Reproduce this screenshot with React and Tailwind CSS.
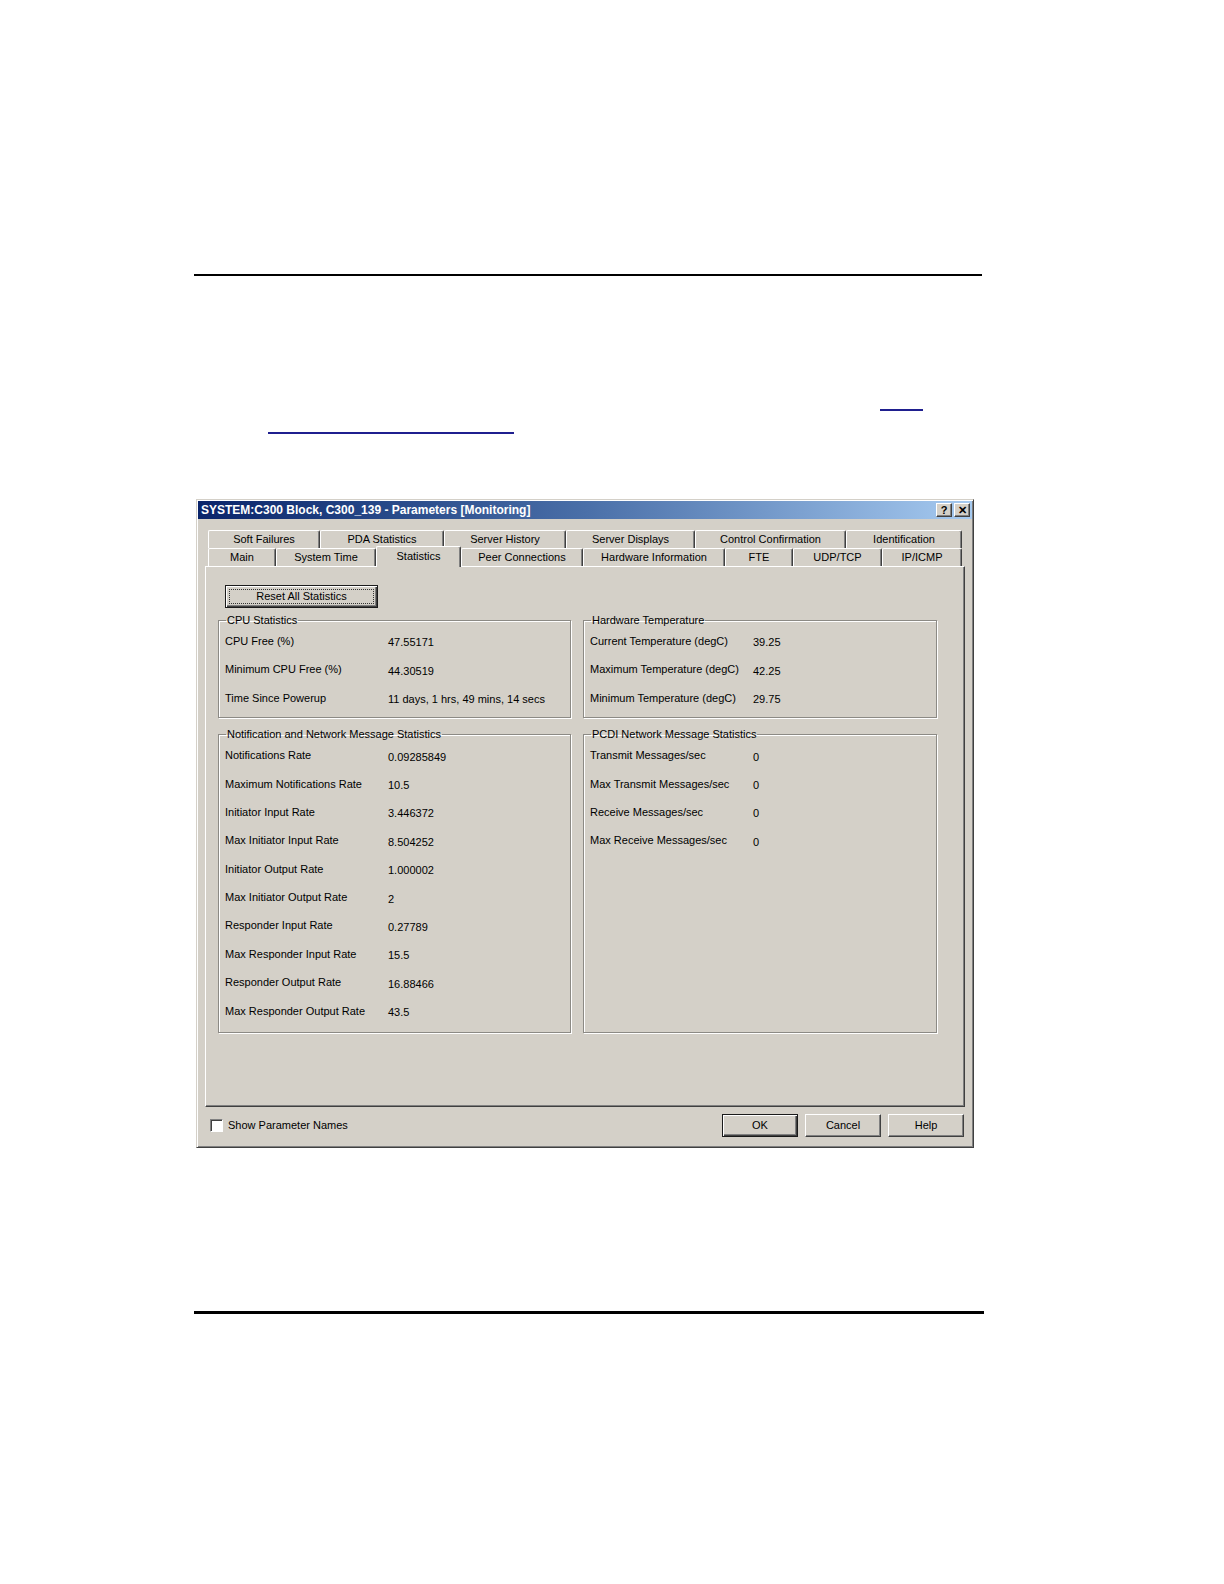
const topTabs = [
  { label: "Soft Failures", w: "w-[112px]" },
  { label: "PDA Statistics", w: "w-[124px]" },
  { label: "Server History", w: "w-[122px]" },
  { label: "Server Displays", w: "w-[129px]" },
  { label: "Control Confirmation", w: "w-[151px]" },
  { label: "Identification", w: "w-[116px]" },
];

const bottomTabs = [
  { label: "Main", w: "w-[68px]" },
  { label: "System Time", w: "w-[100px]" },
  { label: "Statistics", w: "w-[85px]", active: true },
  { label: "Peer Connections", w: "w-[122px]" },
  { label: "Hardware Information", w: "w-[142px]" },
  { label: "FTE", w: "w-[68px]" },
  { label: "UDP/TCP", w: "w-[89px]" },
  { label: "IP/ICMP", w: "w-[80px]" },
];

const cpuRows = [
  ["CPU Free (%)", "47.55171"],
  ["Minimum CPU Free (%)", "44.30519"],
  ["Time Since Powerup", "11 days, 1 hrs, 49 mins, 14 secs"],
];

const tempRows = [
  ["Current Temperature (degC)", "39.25"],
  ["Maximum Temperature (degC)", "42.25"],
  ["Minimum Temperature (degC)", "29.75"],
];

const notifRows = [
  ["Notifications Rate", "0.09285849"],
  ["Maximum Notifications Rate", "10.5"],
  ["Initiator Input Rate", "3.446372"],
  ["Max Initiator Input Rate", "8.504252"],
  ["Initiator Output Rate", "1.000002"],
  ["Max Initiator Output Rate", "2"],
  ["Responder Input Rate", "0.27789"],
  ["Max Responder Input Rate", "15.5"],
  ["Responder Output Rate", "16.88466"],
  ["Max Responder Output Rate", "43.5"],
];

const pcdiRows = [
  ["Transmit Messages/sec", "0"],
  ["Max Transmit Messages/sec", "0"],
  ["Receive Messages/sec", "0"],
  ["Max Receive Messages/sec", "0"],
];

function GroupBox({ title, rows, pb }) {
  return (
    <fieldset
      className={`min-w-0 border border-[#8c8a85] px-[6px] shadow-[inset_1px_1px_0_#fff,1px_1px_0_#fff] ${pb}`}
    >
      <legend className="ml-[1px] px-[1px] text-[11px] leading-[13px]">{title}</legend>
      <div className="flex flex-col">
        {rows.map(([label, value]) => (
          <div key={label} className="flex h-[28.4px] items-center">
            <span className="w-[163px] shrink-0 whitespace-nowrap">{label}</span>
            <span className="whitespace-nowrap pt-[3px]">{value}</span>
          </div>
        ))}
      </div>
    </fieldset>
  );
}

function Win98Button({ children, isDefault, w = "w-[76px]" }) {
  return (
    <button
      type="button"
      className={`flex h-[23px] ${w} items-center justify-center bg-[#d4d0c8] text-[11px] ${
        isDefault
          ? "border border-[#1a1a1a] shadow-[inset_1px_1px_0_#fff,inset_-1px_-1px_0_#404040,inset_-2px_-2px_0_#808080]"
          : "border border-t-white border-l-white border-r-[#404040] border-b-[#404040] shadow-[inset_-1px_-1px_0_#808080]"
      }`}
    >
      {children}
    </button>
  );
}

function TitleButton({ children }) {
  return (
    <div className="flex h-[14px] w-[16px] items-center justify-center border border-t-white border-l-white border-r-[#404040] border-b-[#404040] bg-[#d4d0c8] text-[11px] leading-none font-bold text-black shadow-[inset_-1px_-1px_0_#808080]">
      {children}
    </div>
  );
}

function Tab({ label, w, active }) {
  if (active) {
    return (
      <div
        className={`relative z-10 -mb-[1px] flex h-[21px] ${w} items-center justify-center rounded-t-[2px] border-t border-l border-r border-t-white border-l-white border-r-[#404040] bg-[#d4d0c8] pb-[1px] shadow-[inset_-1px_0_0_#808080]`}
      >
        {label}
      </div>
    );
  }
  return (
    <div
      className={`flex h-full ${w} items-center justify-center rounded-t-[2px] border-t border-l border-r border-t-white border-l-white border-r-[#404040] shadow-[inset_-1px_0_0_#808080]`}
    >
      {label}
    </div>
  );
}

function ParametersDialog() {
  return (
    <div className="ml-[196px] mt-[65px] flex h-[649px] w-[778px] flex-col border border-t-[#d4d0c8] border-l-[#d4d0c8] border-r-[#404040] border-b-[#404040] bg-[#d4d0c8] p-[1px] text-[11px] text-black shadow-[inset_1px_1px_0_#fff,inset_-1px_-1px_0_#808080]">
      {/* title bar */}
      <div className="flex h-[18px] shrink-0 items-center bg-linear-to-r from-[#0a246a] via-[#4a6fa8] to-[#a6caf0] pl-[3px] pr-[2px]">
        <span className="text-[12px] font-bold whitespace-nowrap text-white">
          SYSTEM:C300 Block, C300_139 - Parameters [Monitoring]
        </span>
        <div className="ml-auto flex gap-[2px]">
          <TitleButton>?</TitleButton>
          <TitleButton>✕</TitleButton>
        </div>
      </div>

      <div className="flex flex-1 flex-col px-[7px] pt-[11px]">
        {/* tabs */}
        <div className="ml-[3px] flex w-[754px] flex-col">
          <div className="flex h-[18px]">
            {topTabs.map((t) => (
              <Tab key={t.label} {...t} />
            ))}
          </div>
          <div className="flex h-[18px] items-end">
            {bottomTabs.map((t) => (
              <Tab key={t.label} {...t} />
            ))}
          </div>
        </div>

        {/* tab page */}
        <div className="flex h-[541px] flex-col border border-t-white border-l-white border-r-[#404040] border-b-[#404040] pl-[12px] pt-[18px] shadow-[inset_-1px_-1px_0_#808080]">
          <button
            type="button"
            className="ml-[7px] flex h-[23px] w-[153px] items-center justify-center border border-[#1a1a1a] bg-[#d4d0c8] p-[3px] text-[11px] shadow-[inset_1px_1px_0_#fff,inset_-1px_-1px_0_#404040,inset_-2px_-2px_0_#808080]"
          >
            <span className="flex h-full w-full items-center justify-center border border-dotted border-[#333]">
              Reset All Statistics
            </span>
          </button>

          <div className="mt-[6px] grid grid-cols-[353px_354px] gap-x-[12px] gap-y-[10px]">
            <GroupBox title="CPU Statistics" rows={cpuRows} pb="pb-[5px]" />
            <GroupBox title="Hardware Temperature" rows={tempRows} pb="pb-[5px]" />
            <GroupBox title="Notification and Network Message Statistics" rows={notifRows} pb="pb-[7px]" />
            <GroupBox title="PCDI Network Message Statistics" rows={pcdiRows} pb="pb-[7px]" />
          </div>
        </div>

        {/* footer */}
        <div className="flex pt-[7px]">
          <label className="flex h-[23px] items-center gap-[5px] pl-[5px]">
            <span className="h-[13px] w-[13px] border border-t-[#808080] border-l-[#808080] border-r-white border-b-white bg-white shadow-[inset_1px_1px_0_#404040]" />
            <span>Show Parameter Names</span>
          </label>
          <div className="ml-auto mr-[1px] flex gap-[7px]">
            <Win98Button isDefault>OK</Win98Button>
            <Win98Button>Cancel</Win98Button>
            <Win98Button>Help</Win98Button>
          </div>
        </div>
      </div>
    </div>
  );
}

export default function App() {
  return (
    <div className="min-h-screen bg-white pt-[274px] font-['Liberation_Sans',Arial,sans-serif]">
      <div className="ml-[194px] h-[2px] w-[788px] bg-black" />

      {/* hyperlink underlines from the document text */}
      <div className="ml-[880px] mt-[133px] h-[2px] w-[43px] bg-[#1f1f8f]" />
      <div className="ml-[268px] mt-[21px] h-[2px] w-[246px] bg-[#1f1f8f]" />

      <ParametersDialog />

      <div className="ml-[194px] mt-[163px] h-[3px] w-[790px] bg-black" />
    </div>
  );
}
